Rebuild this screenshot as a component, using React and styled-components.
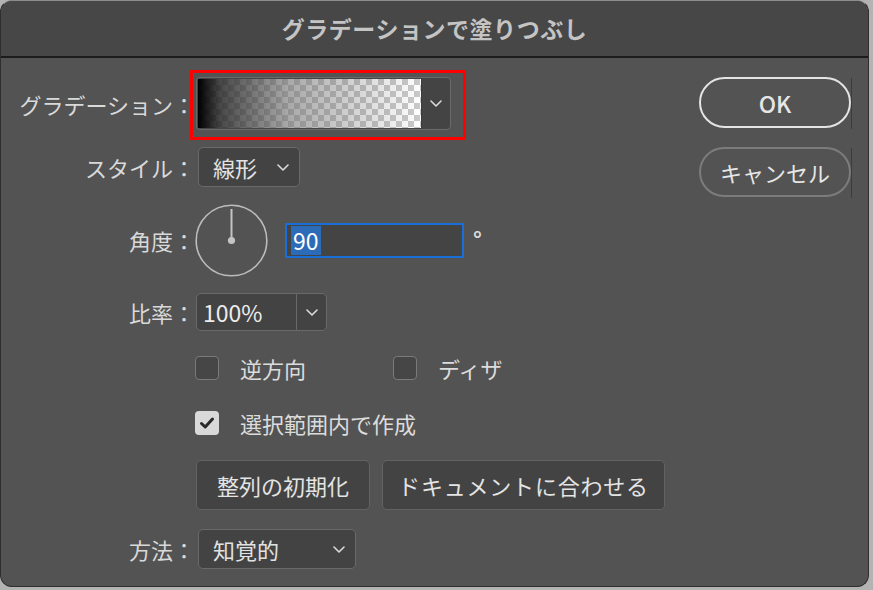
import React from "react";
import styled, { createGlobalStyle } from "styled-components";

const GlobalStyle = createGlobalStyle`
  html, body { margin: 0; padding: 0; background: #b3b3b3; }
  body { font-family: "Noto Sans CJK JP", "Noto Sans", sans-serif; }
  * { box-sizing: border-box; }
`;

const Window = styled.div`
  width: 869px;
  height: 587px;
  border-radius: 12px;
  background: #535353;
  border: 1px solid #2e2e2e;
  border-top-color: #8c8c8c;
  overflow: hidden;
  display: flex;
  flex-direction: column;
`;

const TitleBar = styled.div`
  flex: none;
  height: 57px;
  background: #474747;
  border-bottom: 2px solid #1c1c1c;
  display: flex;
  align-items: center;
  justify-content: center;
  font-size: 23px;
  font-weight: 700;
  color: #c4c4c4;
  letter-spacing: 0.5px;
  padding-bottom: 2px;
`;

const Body = styled.div`
  flex: 1;
  display: flex;
  align-items: flex-start;
`;

const Form = styled.div`
  flex: none;
  width: 698px;
  padding-top: 12px;
  display: grid;
  grid-template-columns: 194px auto;
  grid-template-rows: 70px 54px 92px 52px 60px 50px 74px 54px;
  align-items: center;
`;

const Label = styled.div`
  grid-column: 1;
  justify-self: end;
  font-size: 22px;
  line-height: 1;
  color: #d9d9d9;
  white-space: nowrap;
  margin-top: ${(p) => p.$dy || 0}px;
`;

const Cell = styled.div`
  grid-column: 2;
  display: flex;
  align-items: center;
  margin-left: ${(p) => p.$ml || 0}px;
`;

const Highlight = styled.div`
  border: 3px solid #ff0000;
  padding: 4px 12px 7px 3px;
`;

const GradientPicker = styled.div`
  width: 255px;
  height: 53px;
  display: flex;
  border: 1px solid #6a6a6a;
  border-radius: 4px;
  overflow: hidden;
  background: #444444;
`;

const GradientSwatch = styled.div`
  flex: 1;
  margin: 1px 0 1px 1px;
  background:
    linear-gradient(to right, rgba(0,0,0,1) 0%, rgba(40,40,40,0.85) 10%, rgba(110,110,110,0.6) 40%, rgba(255,255,255,0) 100%),
    conic-gradient(#ffffff 25%, #c9c9c9 0 50%, #ffffff 0 75%, #c9c9c9 0) 0 0 / 12px 12px;
`;

const ArrowPart = styled.div`
  flex: none;
  width: 29px;
  display: flex;
  align-items: center;
  justify-content: center;
  border-left: 1px solid #3a3a3a;
`;

const Select = styled.div`
  width: ${(p) => p.$w}px;
  height: 40px;
  background: #434343;
  border: 1px solid #696969;
  border-radius: 5px;
  display: flex;
  align-items: center;
  justify-content: space-between;
  padding: 0 10px 0 14px;
  font-size: 22px;
  color: #e2e2e2;
`;

const ComboBox = styled.div`
  width: 131px;
  height: 38px;
  background: #434343;
  border: 1px solid #696969;
  border-radius: 5px;
  display: flex;
`;

const ComboText = styled.div`
  width: 100px;
  border-right: 1px solid #696969;
  display: flex;
  align-items: center;
  padding-left: 6px;
  font-size: 23px;
  color: #ececec;
`;

const ComboArrow = styled.div`
  flex: 1;
  display: flex;
  align-items: center;
  justify-content: center;
`;

const AngleInput = styled.div`
  margin-left: 17px;
  width: 179px;
  height: 35px;
  background: #444444;
  border: 2px solid #1a6ed8;
  display: flex;
  align-items: center;
  padding-left: 4px;
`;

const Selected = styled.span`
  background: #2c6bb7;
  color: #ffffff;
  font-size: 23px;
  line-height: 29px;
  padding: 0 2px;
`;

const Degree = styled.span`
  margin-left: 9px;
  margin-top: -4px;
  font-size: 22px;
  font-weight: 700;
  color: #dcdcdc;
`;

const CheckItem = styled.label`
  display: flex;
  align-items: center;
  gap: 21px;
  width: ${(p) => (p.$w ? `${p.$w}px` : "auto")};
  font-size: 22px;
  color: #dcdcdc;
`;

const Box = styled.span`
  width: 24px;
  height: 24px;
  border-radius: 4px;
  flex: none;
  display: flex;
  align-items: center;
  justify-content: center;
  background: ${(p) => (p.$checked ? "#d9d9d9" : "#464646")};
  border: ${(p) => (p.$checked ? "none" : "1.5px solid #7a7a7a")};
`;

const ButtonRow = styled.div`
  display: flex;
  gap: 12px;
`;

const FlatButton = styled.button`
  width: ${(p) => p.$w}px;
  height: 50px;
  padding: 0;
  background: #434343;
  border: 1px solid #626262;
  border-radius: 5px;
  color: #e4e4e4;
  font-family: inherit;
  font-size: 22px;
  letter-spacing: ${(p) => p.$ls || 0}px;
`;

const Side = styled.div`
  flex: none;
  width: 152px;
  display: flex;
  flex-direction: column;
  gap: 19px;
  padding-top: 19px;
`;

const PillButton = styled.button`
  position: relative;
  height: ${(p) => (p.$primary ? 51 : 50)}px;
  border-radius: 26px;
  background: transparent;
  border: 2px solid ${(p) => (p.$primary ? "#e4e4e4" : "#7c7c7c")};
  color: #e6e6e6;
  font-family: inherit;
  font-size: ${(p) => (p.$primary ? 23 : 22)}px;
  font-weight: ${(p) => (p.$primary ? 500 : 400)};
  &::after {
    content: "";
    position: absolute;
    right: -3px;
    top: -1px;
    bottom: -3px;
    width: 1px;
    background: #3c3c3c;
  }
`;

const Chevron = () => (
  <svg width="12" height="7" viewBox="0 0 12 7">
    <path d="M1 1 L6 6 L11 1" stroke="#dadada" strokeWidth="1.6" fill="none" strokeLinecap="round" strokeLinejoin="round" />
  </svg>
);

const Check = () => (
  <svg width="18" height="18" viewBox="0 0 18 18">
    <path d="M3.5 9.5 L7.2 13 L14.5 5" stroke="#2a2a2a" strokeWidth="3" fill="none" strokeLinecap="round" strokeLinejoin="round" />
  </svg>
);

const Dial = () => (
  <svg width="73" height="73" viewBox="0 0 73 73">
    <circle cx="36.5" cy="36.5" r="35.3" stroke="#bcbcbc" strokeWidth="1.6" fill="none" />
    <line x1="36.5" y1="5" x2="36.5" y2="36" stroke="#c4c4c4" strokeWidth="2" />
    <circle cx="36.5" cy="36.5" r="3.6" fill="#c4c4c4" />
  </svg>
);

export default function App() {
  return (
    <>
      <GlobalStyle />
      <Window>
        <TitleBar>グラデーションで塗りつぶし</TitleBar>
        <Body>
          <Form>
            <Label $dy={-3}>グラデーション：</Label>
            <Cell $ml={-5}>
              <Highlight>
                <GradientPicker>
                  <GradientSwatch />
                  <ArrowPart>
                    <Chevron />
                  </ArrowPart>
                </GradientPicker>
              </Highlight>
            </Cell>

            <Label>スタイル：</Label>
            <Cell $ml={3}>
              <Select $w={102}>
                <span>線形</span>
                <Chevron />
              </Select>
            </Cell>

            <Label>角度：</Label>
            <Cell>
              <Dial />
              <AngleInput>
                <Selected>90</Selected>
              </AngleInput>
              <Degree>°</Degree>
            </Cell>

            <Label>比率：</Label>
            <Cell $ml={1}>
              <ComboBox>
                <ComboText>100%</ComboText>
                <ComboArrow>
                  <Chevron />
                </ComboArrow>
              </ComboBox>
            </Cell>

            <Cell>
              <CheckItem $w={198}>
                <Box />
                逆方向
              </CheckItem>
              <CheckItem>
                <Box />
                ディザ
              </CheckItem>
            </Cell>

            <Cell>
              <CheckItem>
                <Box $checked>
                  <Check />
                </Box>
                選択範囲内で作成
              </CheckItem>
            </Cell>

            <Cell $ml={1}>
              <ButtonRow>
                <FlatButton $w={174}>整列の初期化</FlatButton>
                <FlatButton $w={283} $ls={0.8}>ドキュメントに合わせる</FlatButton>
              </ButtonRow>
            </Cell>

            <Label>方法：</Label>
            <Cell $ml={3}>
              <Select $w={158}>
                <span>知覚的</span>
                <Chevron />
              </Select>
            </Cell>
          </Form>
          <Side>
            <PillButton $primary>OK</PillButton>
            <PillButton>キャンセル</PillButton>
          </Side>
        </Body>
      </Window>
    </>
  );
}
